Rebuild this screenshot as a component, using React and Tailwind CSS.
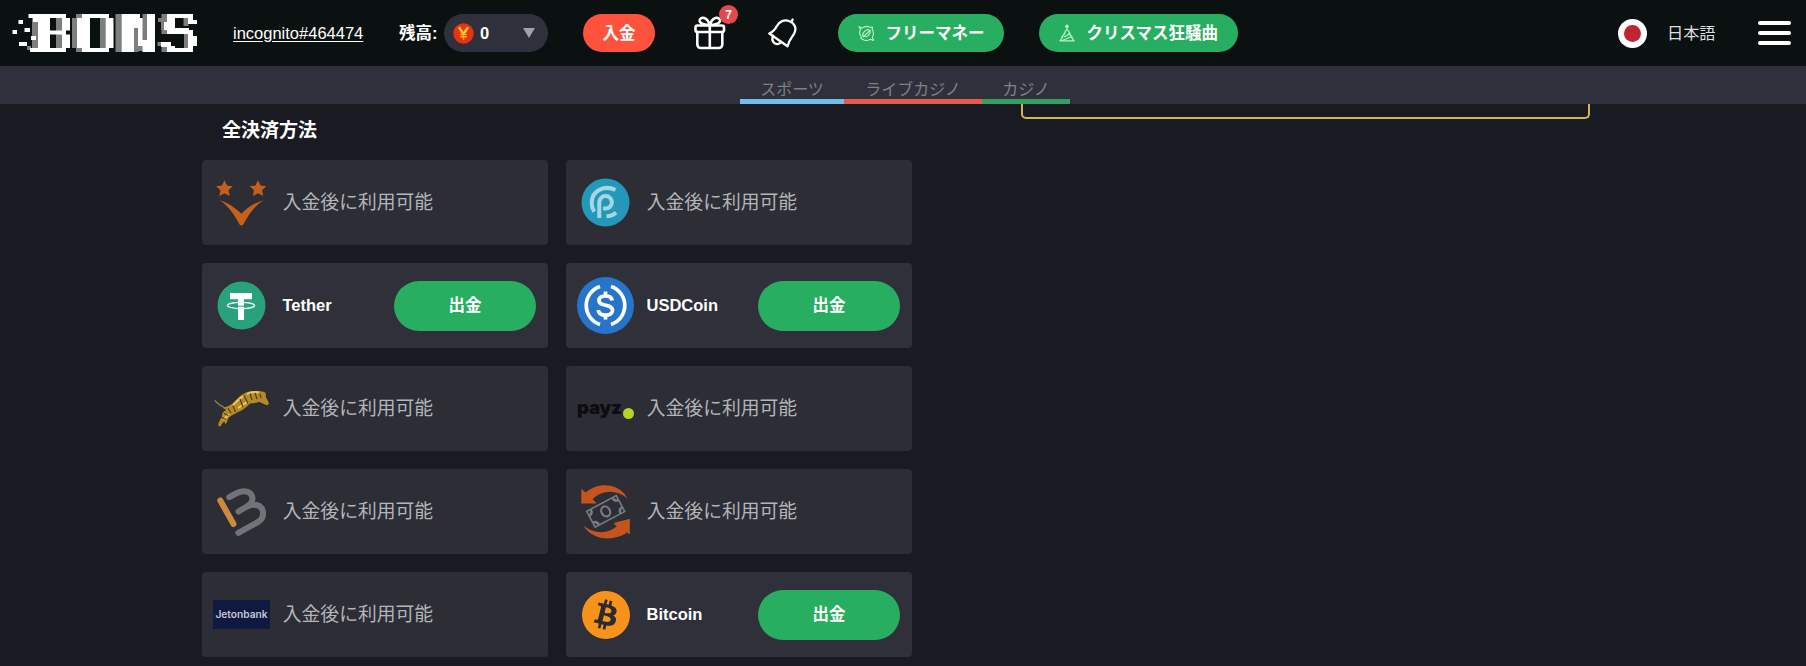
import React from "react";
import { SiBitcoin } from "react-icons/si";

const W = "#ffffff";
const G = "#7d7f7f";
const K = "#0b1111";

// Pixel blocks of the logo: x, y, width, height, colour
const LOGO = [
  [18.5, 20, 4.5, 4, W], [12.5, 30, 4.5, 4, W], [24.5, 28, 5.5, 4, W], [19, 42, 8, 4, W],
  [27, 46, 4, 4, G], [32, 18, 6, 30, G], [28.5, 14, 37.5, 4, W], [38, 14, 28, 38, W], [30, 48, 36, 4, W],
  [62, 18, 8, 12.5, W], [62, 34.5, 8, 13.5, W], [31, 36, 5, 4, W], [33, 18, 5, 4, W],
  [50, 18, 6, 12.5, K], [56, 18, 6, 12.5, G], [50, 34.5, 6, 13.5, K], [56, 34.5, 6, 13.5, G],
  [72, 18, 5, 30, G], [76, 14, 6, 4, G], [76, 48, 6, 4, G], [77, 18, 13, 30, W], [82, 14, 27, 4, W], [82, 48, 27, 4, W],
  [100, 18, 5.5, 30, G], [105.5, 18, 8, 30, W],
  [115.5, 14, 6, 38, G], [121.5, 14, 12.5, 38, W], [134, 14, 6, 14, W], [134, 28, 4.5, 24, G],
  [138, 18, 5, 28, W], [142.5, 14, 5, 26, G], [138, 46, 5, 5, G], [142.5, 40, 5, 12, W], [147, 14, 8, 38, W],
  [161.5, 14, 5.5, 4, G], [158, 18, 4, 4, G], [161, 18, 6, 12, G], [164, 22, 4, 9, W], [167, 14, 26, 4, W], [167, 18, 8, 12, W],
  [183.5, 18, 5, 8, G], [188, 18, 5, 4, W], [188, 20, 9, 4, W], [161.5, 30, 6, 4, G], [167, 28, 22, 6, W],
  [188, 30, 5, 4, W], [184, 34, 5, 14, G], [188, 34, 5, 14, W], [193, 36, 4, 10, W],
  [157.5, 42, 5, 4, G], [161, 42, 10, 5, W], [161.5, 47, 6, 5, G], [167, 46, 8, 4, W], [167, 48, 26, 4, W],
];

function Logo() {
  return (
    <svg width="186" height="40" viewBox="12 13 186 40" className="ml-3 block shrink-0">
      {LOGO.map(([x, y, w, h, c], i) => (
        <rect key={i} x={x} y={y} width={w} height={h} fill={c} />
      ))}
    </svg>
  );
}

function YenCoin() {
  return (
    <svg width="21" height="21" viewBox="0 0 21 21">
      <circle cx="10.5" cy="10.5" r="10.2" fill="#e8330f" />
      <path d="M6 4.300 10.500 11l4.500-6.700" stroke="#fbc531" strokeWidth="2.500" fill="none" />
      <path d="M10.500 10v6.800M7.200 11.400h6.600M7.200 13.800h6.600" stroke="#fbb02a" strokeWidth="1.500" fill="none" />
    </svg>
  );
}

function Gift() {
  return (
    <svg width="32" height="34" viewBox="0 0 32 34" fill="none" stroke="#fff" strokeWidth="2.6" strokeLinejoin="round" strokeLinecap="round">
      <rect x="1.5" y="9.5" width="28.5" height="6.500" rx="2" />
      <path d="M3.300 16v12.500a3.500 3.500 0 0 0 3.500 3.500h18a3.500 3.500 0 0 0 3.500-3.500V16M15.800 9.500V32" />
      <path d="M15.800 9.300C13.500 8.800 6.200 8.600 5.600 5c-.3-2.400 2.200-3.700 4.600-3C13.500 3 15 6.500 15.800 9.300zM15.800 9.300c2.300-.5 9.600-.7 10.200-4.300.3-2.400-2.200-3.700-4.600-3-3.300 1-4.800 4.500-5.600 7.300z" />
    </svg>
  );
}

function Bell() {
  return (
    <svg width="30" height="30" viewBox="0 0 30 30" fill="none" stroke="#fff" strokeWidth="2.300" strokeLinejoin="round" strokeLinecap="round">
      <path d="M1.300 15.500C5.300 13.800 7 11.800 8.700 8.300 11.200 3.300 16.500 1.200 21.500 3.200c5.500 2.200 7.300 7.300 4.700 12.300C24 19.500 21 22 19.500 28.300z" />
      <path d="M23.500 3.800 24.600 1.500M5 17.800c-1.300 3.600-.3 6.300 2 7.600 2.300 1.200 4.600.5 6.200-1.400" />
    </svg>
  );
}

function Satellite() {
  return (
    <svg width="17" height="17" viewBox="0 0 17 17" fill="none" stroke="#b9f3cb" strokeWidth="1.100" strokeLinecap="round" strokeLinejoin="round">
      <path d="M1 1.500 4 3.200C6.300 1.300 9.500 1 12 2.300l2.500-.3-.3 2.500c1.500 2.300 1.500 5.300.2 7.600l1.100 3.400-3.300-1.300c-2.200 1.500-5.200 1.500-7.400.3L3 13.500l.2-2C1.500 9.500 1.300 6.700 2.500 4.600z" />
      <ellipse cx="8.500" cy="8.300" rx="4.200" ry="2.700" transform="rotate(-42 8.500 8.300)" />
      <path d="m5 12 7-6.500" />
    </svg>
  );
}

function Tree() {
  return (
    <svg width="16" height="18" viewBox="0 0 16 18" fill="none" stroke="#b9f3cb" strokeWidth="1.200" strokeLinecap="round" strokeLinejoin="round">
      <path d="M8 5 5 9.300h1L2.800 13h1L1 16.800h14L12.200 13h1L10 9.300h1z" />
      <path d="m5.500 12.700 5-2.700M4 16.200l8-3.400" />
      <circle cx="8" cy="2.400" r="1.200" fill="#b9f3cb" />
    </svg>
  );
}

const STAR = "M0-8.500 2.500-3.200 8.300-2.500 4 1.500 5.200 7.300 0 4.400-5.200 7.300-4 1.500-8.300-2.500-2.500-3.200z";

function Vega() {
  return (
    <svg width="57" height="57" viewBox="0 0 57 57" fill="#c4601c">
      <path d={STAR} transform="translate(11.500 14.800)" />
      <path d={STAR} transform="translate(45 14.800)" />
      <path d="M7 26.200c8 2.500 16.500 8.300 21.300 13.600C33 34.500 42 28.500 50.500 26.200 42 31.500 35.500 40.500 30.300 50.600c-.8 1.300-3 1.300-3.700 0C21.500 40.500 15 31.500 7 26.200z" />
    </svg>
  );
}

function Payp() {
  return (
    <svg width="57" height="57" viewBox="0 0 57 57" fill="none" stroke="#a5d6e3" strokeWidth="4">
      <circle cx="28.500" cy="28.500" r="24" fill="#2498b8" stroke="none" />
      <path d="M38.500 16C28.500 11 14.700 15.500 14.700 29c0 3.300.8 6 2.500 8.800" />
      <path d="M22.300 44V28.300a6.300 6.300 0 1 1 6.300 6.300h-2.500" />
      <path d="M29.500 42.300c3.800 0 6.800-1.200 9.500-3.800" />
    </svg>
  );
}

function Tether() {
  return (
    <svg width="57" height="57" viewBox="0 0 57 57">
      <circle cx="28.500" cy="28.500" r="24" fill="#28a17c" />
      <path d="M17 16h22v6.300h-8V43h-6V22.300h-8z" fill="#fff" />
      <ellipse cx="28" cy="28.500" rx="13.500" ry="3.100" fill="none" stroke="#e4f5ef" strokeWidth="1.400" />
      <path d="M25 29.200h6" stroke="#28a17c" strokeWidth="1" />
    </svg>
  );
}

function Usdc() {
  return (
    <svg width="57" height="57" viewBox="0 0 57 57" fill="none" stroke="#fff" strokeWidth="3.700">
      <circle cx="28.500" cy="28.500" r="28.500" fill="#2775ca" stroke="none" />
      <path d="M23 9.500a20 20 0 0 0 0 38M34 9.500a20 20 0 0 1 0 38" />
      <path d="M35.200 23.500c-.5-3.200-3-4.700-6.700-4.700-4 0-6.500 1.800-6.500 4.600 0 6.800 13.500 3 13.500 9.900 0 3-2.800 4.900-7 4.900-4.300 0-6.900-1.800-7.200-5.200M28.500 14.500v4.300M28.500 38.200v4.300" />
    </svg>
  );
}

function Tiger() {
  return (
    <svg width="57" height="57" viewBox="0 0 57 57">
      <path d="M1.500 20.500c3 1.800 4.500 5.500 9 6.200" fill="none" stroke="#8a8348" strokeWidth="1.400" />
      <path
        d="M9 27.500c3-.3 5.500-.7 9-3 4-2.500 7-7.500 12-10.500 4-2.300 9-3.500 13-3 3 .2 7 0 9 1.500 1.500 1.200.5 3 1 5l2.500 4.500c.8 2.500-.5 3.500-2.500 3-1.500-1-4-1.500-6-3-3 0-6 1.700-10 1.500-3.500 4-8 7.300-13 9-2 2-6 2.500-8 5-1.500 1.500-1.300 4-3 6-1 .7-1.500-.5-1.200-2-2 .5-3.300 2.500-3.600 4-1 1.500-3 .8-3-.7 1-3.300 1.500-5 3.800-7.500-.5-5 3-6.500 4.500-7.500-1.500-.5-3-1.200-4.500-2.300z"
        fill="#b58a24"
      />
      <path d="M20 25c3-2.500 6-6.500 10-8.500M34 14c4-2 8-2.500 12-1.500M11 40c1-2.500 3-4 5-6M25 28l9-6" fill="none" stroke="#e5cb62" strokeWidth="2" />
      <path d="m15 28 3 5M20 26l2.500 6M27 19l3 8M31 15.500l4 8M37 13.500l2 6.500M42 13l2 6M47 14l1 4M8 37l5 2.500M11 33.500l4.500 2" fill="none" stroke="#59400f" strokeWidth="1.300" />
    </svg>
  );
}

function Payz() {
  return (
    <div className="mb-[4px] flex w-[57px] items-end whitespace-nowrap">
      <span className="w-[46px] font-['Inter',sans-serif] text-[18.500px] font-black leading-[24px] tracking-[-0.200px] text-[#0c0c12]">payz</span>
      <span className="size-[11px] shrink-0 rounded-full bg-[#b5d424]" />
    </div>
  );
}

function SlantB() {
  return (
    <svg width="57" height="57" viewBox="0 0 57 57" fill="none" strokeLinecap="round" strokeLinejoin="round">
      <path d="M7.300 17.500 20.500 41" stroke="#cc8a3c" strokeWidth="6" />
      <path d="M16.300 14.200 23 10.500c7-4 16-2.500 16.500 5 0 4-3 6.500-6 8.200L25.500 28.500M34 23.500c6-3.300 14-2 15.700 4 1.200 5-.7 9-4.700 11.500L25.300 49.800" stroke="#727378" strokeWidth="6" />
    </svg>
  );
}

function CashCycle() {
  return (
    <svg width="57" height="57" viewBox="0 0 57 57">
      <g fill="#c4551f">
        <path d="M4.300 6 8.800 9.500C20-1 42-1 50.500 15.500 39.500 6.500 26 6.500 15.500 16l4.300 4.500H4.300z" />
        <path d="M52.800 36 48.800 50.500C37 58 15 58 6.500 42.500c11 9 24.500 9 34.500-.5l-4-2.200z" />
        <path d="m36.500 41 16.300-5v15.500z" />
      </g>
      <g transform="rotate(-28 28.500 28.500)" fill="none" stroke="#777a80" strokeWidth="1.600">
        <rect x="12" y="19.500" width="33.500" height="18" />
        <ellipse cx="28.700" cy="28.500" rx="4.200" ry="5.300" strokeWidth="2.200" />
        <path d="M12 24.500c3 0 4.500-2 4.500-5M45.500 24.500c-3 0-4.500-2-4.500-5M12 32.500c3 0 4.500 2 4.500 5M45.500 32.500c-3 0-4.500 2-4.500 5" strokeWidth="2.500" />
      </g>
    </svg>
  );
}

function Jeton() {
  return (
    <div className="flex h-[29px] w-[57px] items-center justify-center bg-[#101a40] font-['Inter',sans-serif] text-[10.200px] font-semibold text-[#c3c6d0]">
      Jetonbank
    </div>
  );
}

function Bitcoin() {
  return (
    <div className="flex size-[48px] items-center justify-center rounded-full bg-[#2b2a30]">
      <SiBitcoin size={48} color="#f7931a" />
    </div>
  );
}

const METHODS = [
  { icon: Vega }, { icon: Payp },
  { icon: Tether, name: "Tether" }, { icon: Usdc, name: "USDCoin" },
  { icon: Tiger }, { icon: Payz },
  { icon: SlantB }, { icon: CashCycle },
  { icon: Jeton }, { icon: Bitcoin, name: "Bitcoin" },
];

function MethodCard({ icon: Icon, name }) {
  return (
    <div className={`flex h-[85px] items-center rounded pl-[11px] pr-3 ${name ? "bg-[#2f303a]" : "bg-[#2c2d35]"}`}>
      <div className="flex w-[57px] shrink-0 items-center justify-center"><Icon /></div>
      {name ? (
        <>
          <span className="ml-[12.500px] grow text-[16.500px] font-bold text-white">{name}</span>
          <button className="h-[50px] w-[142px] rounded-full bg-[#27ae60] text-[16.500px] font-bold text-white">出金</button>
        </>
      ) : (
        <span className="ml-[12.800px] pt-[2px] text-[18.800px] text-[#b4b5ba]">入金後に利用可能</span>
      )}
    </div>
  );
}

export default function App() {
  return (
    <div className="flex h-[666px] w-[1806px] flex-col overflow-hidden bg-[#1a1a22] font-['Liberation_Sans','Noto_Sans_CJK_JP',sans-serif] text-white">
      <header className="flex h-[66px] shrink-0 items-center bg-[#0b1111] text-[16.500px]">
        <Logo />
        <a className="ml-[35px] w-[131px] whitespace-nowrap underline underline-offset-2">incognito#464474</a>
        <span className="ml-[35px] w-[39px] whitespace-nowrap font-bold">残高:</span>
        <div className="ml-[6px] flex h-[38px] w-[104px] items-center rounded-full bg-[#2f303b] pl-[9px] pr-[13px]">
          <YenCoin />
          <span className="ml-1.5 grow font-bold">0</span>
          <svg width="12" height="10" viewBox="0 0 12 10"><path d="M0 0h12L6 10z" fill="#a0a2a8" /></svg>
        </div>
        <button className="ml-[35px] h-[38px] w-[72px] rounded-full bg-[#ff523d] font-bold">入金</button>
        <div className="relative ml-[39px] h-[34px] w-8">
          <Gift />
          <span className="absolute -top-[11px] left-[25px] flex size-[19px] items-center justify-center rounded-full bg-[#e5484f] text-[12px] font-bold">7</span>
        </div>
        <div className="ml-[42px] w-[30px]"><Bell /></div>
        <button className="ml-[39.500px] flex h-[38px] w-[166px] items-center rounded-full bg-[#27ae60] pl-5 font-bold">
          <Satellite />
          <span className="ml-[11px] whitespace-nowrap">フリーマネー</span>
        </button>
        <button className="ml-[35px] flex h-[38px] w-[199px] items-center rounded-full bg-[#27ae60] pl-5 font-bold">
          <Tree />
          <span className="ml-[12px] whitespace-nowrap">クリスマス狂騒曲</span>
        </button>
        <div className="ml-auto flex size-[29px] items-center justify-center rounded-full bg-white">
          <span className="size-[17px] rounded-full bg-[#bf2433]" />
        </div>
        <span className="ml-5 w-[49px] whitespace-nowrap text-[16.200px] text-[#dedfdf]">日本語</span>
        <div className="ml-[42px] mr-[15px] flex w-[33px] flex-col gap-[6px]">
          <span className="h-1 rounded-full bg-white" />
          <span className="h-1 rounded-full bg-white" />
          <span className="h-1 rounded-full bg-white" />
        </div>
      </header>
      <nav className="flex h-[38px] shrink-0 items-end bg-[#2f303b] pl-[740px] text-[16px] leading-[18px] text-[#7e8087]">
        <span className="w-[104px] whitespace-nowrap border-b-[5px] border-[#73bdec] text-center">スポーツ</span>
        <span className="w-[138px] whitespace-nowrap border-b-[5px] border-[#e65a4f] text-center">ライブカジノ</span>
        <span className="w-[88px] whitespace-nowrap border-b-[5px] border-[#32a062] text-center">カジノ</span>
      </nav>
      <main className="flex items-start pl-[202px]">
        <section className="w-[710px]">
          <h2 className="ml-5 mt-[13px] h-[43px] text-[19px] font-bold leading-[28px]">全決済方法</h2>
          <div className="grid grid-cols-2 gap-[18px]">
            {METHODS.map((m, i) => <MethodCard key={i} {...m} />)}
          </div>
        </section>
        <aside className="ml-[109px] h-[15px] w-[569px] rounded-b-[5px] border-2 border-t-0 border-[#d3b455]" />
      </main>
    </div>
  );
}
